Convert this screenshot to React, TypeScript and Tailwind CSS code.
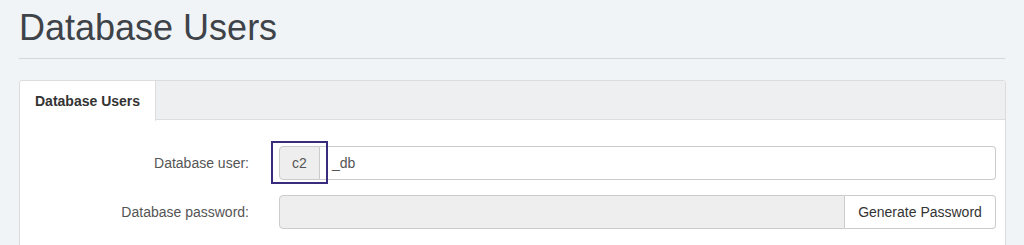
import React from 'react';

const font = { fontFamily: '"Liberation Sans", Arial, sans-serif' };

export default function App() {
  return (
    <div className="min-h-screen bg-[#f1f4f6] px-[19px] text-[14px]" style={font}>
      {/* Page title */}
      <div className="pt-[8px] pb-[10px] border-b border-[#d3d7db]">
        <h1 className="text-[36px] leading-[40px] font-normal text-[#3e4349]">Database Users</h1>
      </div>

      {/* Panel */}
      <div className="mt-[21px] w-[987px] bg-white border border-[#dcdcdc] rounded-[3px]">
        <div className="flex h-[39px] bg-[#eeeff0] border-b border-[#dddddd] rounded-t-[3px]">
          <div className="w-[136px] h-[40px] bg-white border-r border-[#dddddd] pl-[15px] flex items-center font-bold text-[#333333] rounded-tl-[3px]">
            Database Users
          </div>
        </div>

        <div className="pt-[26px] pb-[20px] pr-[9px] flex flex-col gap-[15px]">
          {/* Database user */}
          <div className="flex items-center">
            <label className="w-[229px] text-right text-[#555555]">Database user:</label>
            <div className="ml-[30px] flex-1 flex h-[34px]">
              <div className="relative w-[41px] flex items-center justify-center bg-[#eeeeee] border border-[#cccccc] rounded-l-[4px] text-[#555555]">
                c2
                <div className="absolute left-[-9px] top-[-6px] w-[57px] h-[43px] border-2 border-[#3a2c7c]" />
              </div>
              <div className="flex-1 flex items-center pl-[12px] border border-l-0 border-[#cccccc] rounded-r-[4px] text-[#555555]">
                _db
              </div>
            </div>
          </div>

          {/* Database password */}
          <div className="flex items-center">
            <label className="w-[229px] text-right text-[#555555]">Database password:</label>
            <div className="ml-[30px] flex-1 flex h-[34px]">
              <div className="flex-1 bg-[#eeeeee] border border-[#cccccc] rounded-l-[4px]" />
              <button className="w-[151px] bg-white border border-l-0 border-[#cccccc] rounded-r-[4px] text-[#333333]">
                Generate Password
              </button>
            </div>
          </div>
        </div>
      </div>
    </div>
  );
}
